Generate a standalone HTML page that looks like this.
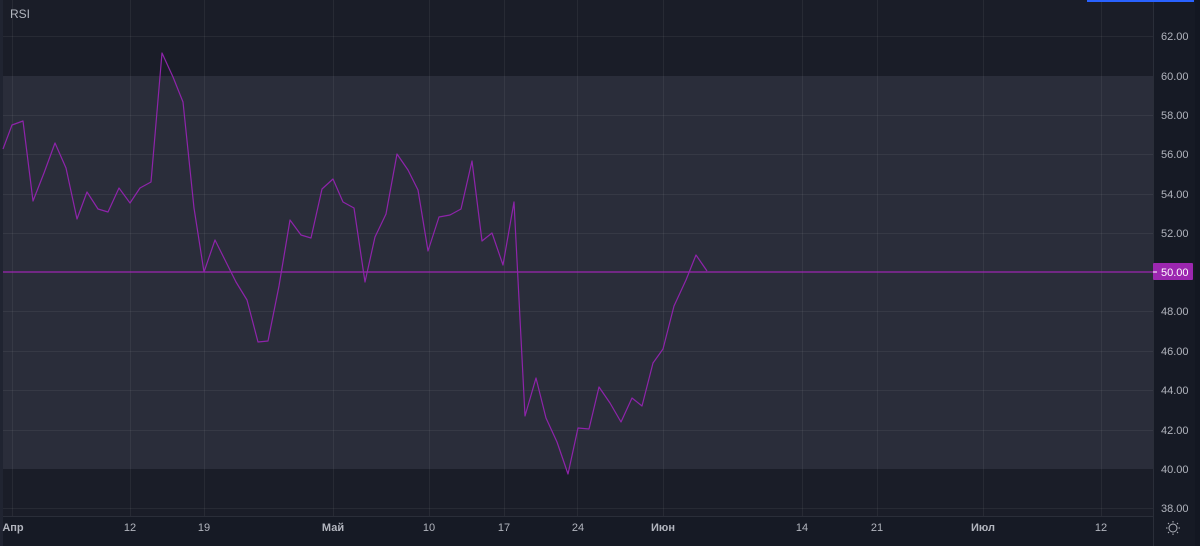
<!DOCTYPE html>
<html><head><meta charset="utf-8"><style>
html,body{margin:0;padding:0;background:#161a25;}
body{width:1200px;height:546px;overflow:hidden;position:relative;font-family:"Liberation Sans",sans-serif;}
</style></head><body>
<svg width="1200" height="546" style="position:absolute;left:0;top:0" xmlns="http://www.w3.org/2000/svg">
<rect x="0" y="0" width="1200" height="546" fill="#161a25"/>
<rect x="0" y="0" width="3" height="546" fill="#202431"/>
<rect x="3" y="0" width="1150" height="516" fill="#1a1d28"/>
<rect x="3" y="76" width="1150" height="393" fill="#2a2d3a"/>
<g stroke="#ffffff" stroke-opacity="0.06" stroke-width="1">
<line x1="3" x2="1153" y1="36.5" y2="36.5"/><line x1="3" x2="1153" y1="115.5" y2="115.5"/>
<line x1="3" x2="1153" y1="154.5" y2="154.5"/><line x1="3" x2="1153" y1="194.5" y2="194.5"/>
<line x1="3" x2="1153" y1="233.5" y2="233.5"/><line x1="3" x2="1153" y1="311.5" y2="311.5"/>
<line x1="3" x2="1153" y1="351.5" y2="351.5"/><line x1="3" x2="1153" y1="390.5" y2="390.5"/>
<line x1="3" x2="1153" y1="430.5" y2="430.5"/><line x1="3" x2="1153" y1="508.5" y2="508.5"/>
<line y1="0" y2="516" x1="12.5" x2="12.5"/><line y1="0" y2="516" x1="130.5" x2="130.5"/>
<line y1="0" y2="516" x1="204.5" x2="204.5"/><line y1="0" y2="516" x1="333.5" x2="333.5"/>
<line y1="0" y2="516" x1="429.5" x2="429.5"/><line y1="0" y2="516" x1="504.5" x2="504.5"/>
<line y1="0" y2="516" x1="577.5" x2="577.5"/><line y1="0" y2="516" x1="663.5" x2="663.5"/>
<line y1="0" y2="516" x1="802.5" x2="802.5"/><line y1="0" y2="516" x1="877.5" x2="877.5"/>
<line y1="0" y2="516" x1="983.5" x2="983.5"/><line y1="0" y2="516" x1="1101.5" x2="1101.5"/>
</g>
<line x1="3" x2="1153" y1="516.5" y2="516.5" stroke="#2a2e39"/>
<line x1="1153.5" x2="1153.5" y1="0" y2="546" stroke="#2a2e39"/>
<line x1="3" x2="1153" y1="272" y2="272" stroke="#9c27b0" stroke-width="1.2"/>
<polyline fill="none" stroke="#8e24aa" stroke-width="1.2" stroke-linejoin="round" points="3,149 12,125 23,121 33,201 44,173 55,143 66,168 77,219 87,192 98,209 108,212 119,188 130,203 140,188 151,182 162,53 173,77 183,102 194,208 204,272 215,240 226,262 236,282 247,300 258,342 268,341 279,286 290,220 301,235 311,238 322,189 333,179 343,202 354,208 365,282 375,237 386,214 397,154 408,170 418,190 428,251 439,217 450,215 461,209 472,161 482,241 492,233 503,265 514,202 525,416 536,378 546,418 557,442 568,474 578,428 589,429 599,387 610,403 621,422 632,398 642,406 653,363 663,349 674,306 686,280 696,255 707,271"/>
<rect x="1087" y="0" width="107" height="2" fill="#2962ff"/>
<rect x="1195" y="0" width="5" height="546" fill="#131722"/>
<g font-size="11" fill="#b2b5be" font-family="Liberation Sans,sans-serif">
<text x="10" y="18" font-size="12" fill="#b2b5be">RSI</text>
<text x="1161" y="40">62.00</text><text x="1161" y="80">60.00</text>
<text x="1161" y="119">58.00</text><text x="1161" y="158">56.00</text>
<text x="1161" y="198">54.00</text><text x="1161" y="237">52.00</text>
<text x="1161" y="315">48.00</text><text x="1161" y="355">46.00</text>
<text x="1161" y="394">44.00</text><text x="1161" y="434">42.00</text>
<text x="1161" y="473">40.00</text><text x="1161" y="512">38.00</text>
</g>
<rect x="1153" y="263" width="40" height="17" fill="#9c27b0" rx="1"/>
<line x1="1153" x2="1157" y1="272" y2="272" stroke="#fff"/>
<text x="1161" y="276" font-size="11" fill="#fff">50.00</text>
<g font-size="11" fill="#b2b5be" text-anchor="middle">
<text x="13" y="531" font-weight="bold">Апр</text>
<text x="130" y="531">12</text><text x="204" y="531">19</text>
<text x="333" y="531" font-weight="bold">Май</text>
<text x="429" y="531">10</text><text x="504" y="531">17</text>
<text x="578" y="531">24</text><text x="663" y="531" font-weight="bold">Июн</text>
<text x="802" y="531">14</text><text x="877" y="531">21</text>
<text x="983" y="531" font-weight="bold">Июл</text><text x="1101" y="531">12</text>
</g>
<g stroke="#b2b5be" stroke-width="1" fill="none">
<circle cx="1173" cy="528" r="4"/>
<line x1="1173" y1="521" x2="1173" y2="522.5"/><line x1="1173" y1="533.5" x2="1173" y2="535"/>
<line x1="1166" y1="528" x2="1167.5" y2="528"/><line x1="1178.5" y1="528" x2="1180" y2="528"/>
<line x1="1168" y1="523" x2="1169" y2="524"/><line x1="1177" y1="532" x2="1178" y2="533"/>
<line x1="1178" y1="523" x2="1177" y2="524"/><line x1="1169" y1="532" x2="1168" y2="533"/>
</g>
</svg>
</body></html>
